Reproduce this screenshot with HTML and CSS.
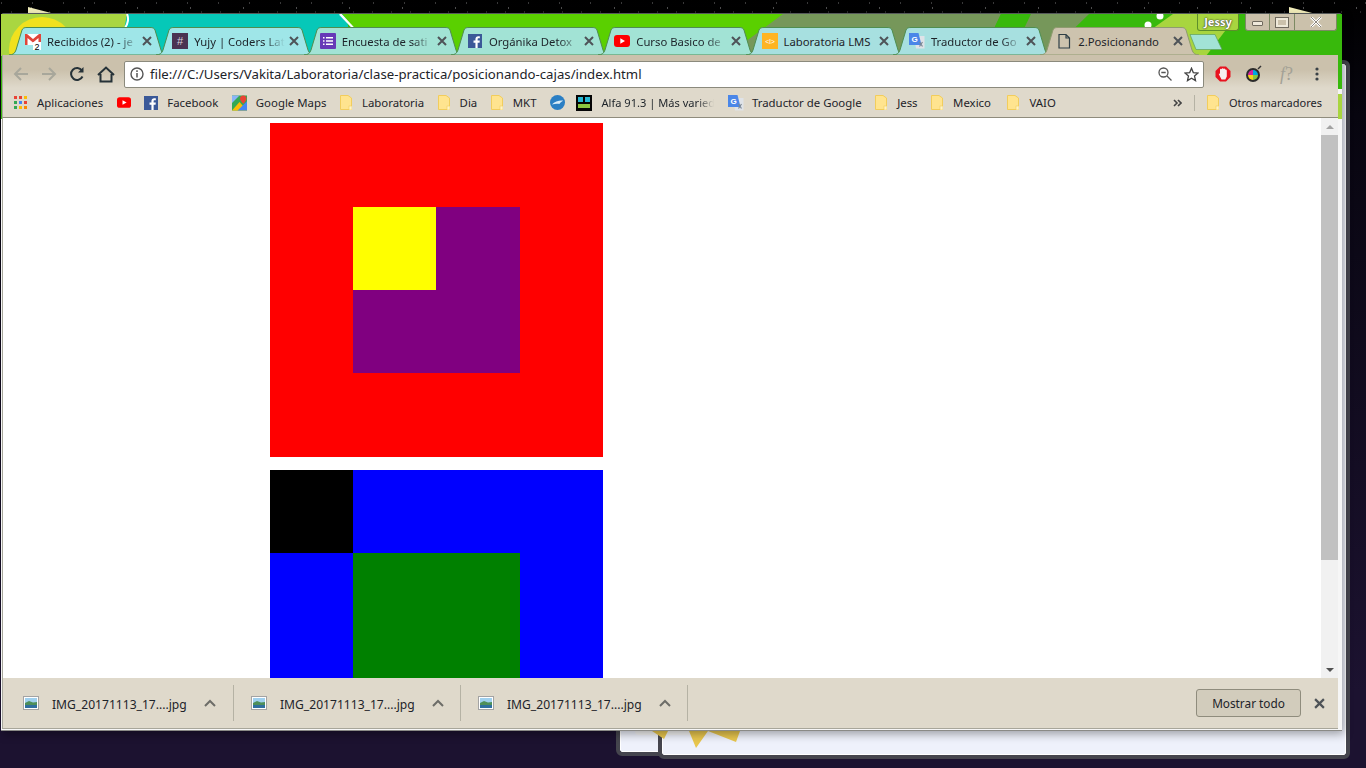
FILE: index.html
```html
<!DOCTYPE html>
<html>
<head>
  <title>2.Posicionando</title>
  <link rel="stylesheet" href="styles.css">
</head>
<body>
  <svg class="defs" width="0" height="0">
    <symbol id="tab-shape" viewBox="0 0 159 28" preserveAspectRatio="none">
      <path d="M0 28C4 28 6 26 7 23L13 3C14 1 15 .5 18 .5H141C144 .5 145 1 146 3L152 23C153 26 155 28 159 28Z"/>
    </symbol>
    <symbol id="folder" viewBox="0 0 12 15">
      <path d="M.5.5H8L11.500 3V14.500H.5Z" fill="#ffe48f" stroke="#f2cd5c"/>
      <rect x="9" y="11" width="3" height="4" fill="#fff3c6" stroke="#f2cd5c" stroke-width=".6"/>
    </symbol>
    <symbol id="close-x" viewBox="0 0 10 10">
      <path d="M1 1L9 9M9 1L1 9" stroke="#4e5358" stroke-width="2" fill="none"/>
    </symbol>
    <symbol id="fb" viewBox="0 0 16 16">
      <rect width="16" height="16" fill="#3b5998"/>
      <path d="M11 16V10h2.200l.3-2.500H11V6c0-.8.3-1.200 1.200-1.200h1.300V2.600C13.200 2.500 12.500 2.500 11.800 2.500 9.800 2.500 8.500 3.700 8.500 5.800V7.500H6.300V10h2.200v6Z" fill="#fff"/>
    </symbol>
    <symbol id="yt" viewBox="0 0 16 12">
      <rect width="16" height="12" rx="3" fill="#f00"/>
      <path d="M6.300 3.300L11 6 6.300 8.700Z" fill="#fff"/>
    </symbol>
    <symbol id="translate" viewBox="0 0 16 16">
      <path d="M5 3H15.500V15.500H7Z" fill="#dfe3e8"/>
      <path d="M0 0H9.500L12.500 12H0Z" fill="#4a86e8"/>
      <path d="M10.500 9l3 4.500M13.500 9l-3 4.500" stroke="#7b8794" stroke-width="1.200"/>
    </symbol>
    <symbol id="pic" viewBox="0 0 16 14">
      <rect x=".5" y=".5" width="15" height="13" fill="#fff" stroke="#a3a3a3"/>
      <rect x="2" y="2" width="12" height="5" fill="#9fd0ee"/>
      <path d="M2 7L6 5 10 6.500 14 6V9H2Z" fill="#4e8f5a"/>
      <rect x="2" y="9" width="12" height="3" fill="#2f6f9f"/>
    </symbol>
    <symbol id="chev" viewBox="0 0 12 8">
      <path d="M1 7L6 2 11 7" fill="none" stroke="#6d6d68" stroke-width="2"/>
    </symbol>
  </svg>

  <div class="paper-scrap paper-left"></div>
  <div class="paper-scrap paper-right"></div>
  <div class="back-window back-a"></div>
  <div class="back-window back-b"></div>
  <div class="back-sheet"></div>
  <svg class="back-stars" width="90" height="20" viewBox="0 0 90 20">
    <path d="M0 0H16L12 8Z M37 0H56L44 17Z M56 0H88L84 11Z" fill="#e8c64e"/>
  </svg>

  <div class="browser">
    <svg class="theme" width="1341" height="105" viewBox="0 0 1341 105" preserveAspectRatio="none">
      <rect width="1341" height="105" fill="#38b90c"/>
      <rect y="75" x="1336" width="5" height="5" fill="#f4f4f4"/>
      <rect y="80" x="1336" width="5" height="25" fill="#a8d53f"/>
      <rect width="135" height="42" fill="#a9d641"/>
      <circle cx="41" cy="36" r="33" fill="#f0e11e"/>
      <path d="M126 0H345L352 42H118Z" fill="#06c8b8"/>
      <path d="M126 0C128 4 127 10 124 14" stroke="#fff" stroke-width="2" fill="none"/>
      <path d="M339 0L360 22" stroke="#fff" stroke-width="2.500" fill="none"/>
      <path d="M341 0H790L730 42H380Z" fill="#5ad000"/>
      <path d="M782 0H1000L980 42H725Z" fill="#76975a"/>
      <path d="M1000 0H1030L1005 42H980Z" fill="#38b90c"/>
      <path d="M1030 0H1088L1045 42H1010Z" fill="#76975a"/>
      <path d="M1172 0H1237L1205 42H1172L1144 20Z" fill="#a8d53f"/>
      <circle cx="1159" cy="2" r="3.500" fill="#fff"/>
      <circle cx="1147" cy="11" r="3.500" fill="#fff"/>
    </svg>

    <div class="tabstrip">
      <div class="tab tab-teal">
        <svg class="tab-bg"><use href="#tab-shape"/></svg>
        <svg class="favicon" width="16" height="17" viewBox="0 0 16 17">
          <rect y="1" width="16" height="11" fill="#fff"/>
          <path d="M0 1H2L8 6 14 1H16V12H13.500V5L8 9.500 2.500 5V12H0Z" fill="#e0453a"/>
          <rect x="8" y="9" width="8" height="8" fill="#fff"/>
          <text x="9.500" y="16.500" class="gmail-count">2</text>
        </svg>
        <span class="tab-title">Recibidos (2) - je</span>
        <svg class="tab-close"><use href="#close-x"/></svg>
      </div>
      <div class="tab tab-teal">
        <svg class="tab-bg"><use href="#tab-shape"/></svg>
        <svg class="favicon" width="16" height="16" viewBox="0 0 16 16">
          <rect width="16" height="16" fill="#4a3352"/>
          <text x="8" y="12" class="hash">#</text>
        </svg>
        <span class="tab-title">Yujy | Coders Lat</span>
        <svg class="tab-close"><use href="#close-x"/></svg>
      </div>
      <div class="tab tab-mint">
        <svg class="tab-bg"><use href="#tab-shape"/></svg>
        <svg class="favicon" width="16" height="16" viewBox="0 0 16 16">
          <rect width="16" height="16" rx="1" fill="#673ab7"/>
          <path d="M3 4H4.500V5.500H3ZM6 4H13V5.500H6ZM3 7.300H4.500V8.800H3ZM6 7.300H13V8.800H6ZM3 10.600H4.500V12.100H3ZM6 10.600H13V12.100H6Z" fill="#fff"/>
        </svg>
        <span class="tab-title">Encuesta de sati</span>
        <svg class="tab-close"><use href="#close-x"/></svg>
      </div>
      <div class="tab tab-mint">
        <svg class="tab-bg"><use href="#tab-shape"/></svg>
        <svg class="favicon" width="14" height="14"><use href="#fb"/></svg>
        <span class="tab-title">Orgánika Detox</span>
        <svg class="tab-close"><use href="#close-x"/></svg>
      </div>
      <div class="tab tab-mint">
        <svg class="tab-bg"><use href="#tab-shape"/></svg>
        <svg class="favicon" width="16" height="16" viewBox="0 -2 16 16"><use href="#yt" width="16" height="12"/></svg>
        <span class="tab-title">Curso Basico de</span>
        <svg class="tab-close"><use href="#close-x"/></svg>
      </div>
      <div class="tab tab-blue">
        <svg class="tab-bg"><use href="#tab-shape"/></svg>
        <svg class="favicon" width="16" height="16" viewBox="0 0 16 16">
          <rect width="16" height="16" fill="#ffb422"/>
          <text x="8" y="10.500" class="lab-mark">&lt;l&gt;</text>
        </svg>
        <span class="tab-title tab-title-full">Laboratoria LMS</span>
        <svg class="tab-close"><use href="#close-x"/></svg>
      </div>
      <div class="tab tab-blue">
        <svg class="tab-bg"><use href="#tab-shape"/></svg>
        <svg class="favicon" width="16" height="16" viewBox="0 0 16 16"><use href="#translate"/><text x="5.500" y="9" class="g-mark">G</text></svg>
        <span class="tab-title">Traductor de Go</span>
        <svg class="tab-close"><use href="#close-x"/></svg>
      </div>
      <div class="tab tab-active">
        <svg class="tab-bg"><use href="#tab-shape"/></svg>
        <svg class="favicon" width="16" height="16" viewBox="0 0 16 16">
          <path d="M3 1.500H10L13.500 5V15H3ZM10 1.500V5H13.500" fill="none" stroke="#2f3f46" stroke-width="1.200"/>
        </svg>
        <span class="tab-title tab-title-full">2.Posicionando</span>
        <svg class="tab-close"><use href="#close-x"/></svg>
      </div>
      <svg class="new-tab" width="33" height="16" viewBox="0 0 33 16">
        <path d="M1 .5H26L33 15.500H7Z" fill="#a2e3d6" stroke="#5f9f5e" stroke-width=".7"/>
      </svg>
    </div>

    <div class="caption">
      <span class="profile">Jessy</span>
      <div class="win-buttons">
        <span class="win-btn btn-min"><i></i></span>
        <span class="win-btn btn-max"><i></i></span>
        <span class="win-btn btn-close">
          <svg width="12" height="10" viewBox="0 0 12 10"><path d="M1 0L11 10M11 0L1 10" stroke="#fff" stroke-width="2.500"/><path d="M1 0L11 10M11 0L1 10" stroke="#6f6a5e" stroke-width=".8"/></svg>
        </span>
      </div>
    </div>

    <div class="toolbar">
      <svg class="tool" width="16" height="16" viewBox="0 0 16 16"><path d="M15 8H2M8 2L2 8 8 14" class="nav-off"/></svg>
      <svg class="tool" width="16" height="16" viewBox="0 0 16 16"><path d="M1 8H14M8 2L14 8 8 14" class="nav-off"/></svg>
      <svg class="tool" width="16" height="16" viewBox="0 0 16 16">
        <path d="M13.500 10.500A6 6 0 1 1 13 4.500" class="nav-on"/>
        <path d="M14.500 1V6.500H9Z" fill="#263238"/>
      </svg>
      <svg class="tool" width="18" height="17" viewBox="0 0 18 17"><path d="M1 9L9 1.500 17 9M3.500 8V15.500H14.500V8" class="nav-on"/></svg>
      <div class="omnibox">
        <svg class="info" width="14" height="14" viewBox="0 0 14 14">
          <circle cx="7" cy="7" r="6" fill="none" stroke="#555" stroke-width="1.400"/>
          <path d="M7 6V10.500M7 3.300V5" stroke="#555" stroke-width="1.500"/>
        </svg>
        <span class="url">file:///C:/Users/Vakita/Laboratoria/clase-practica/posicionando-cajas/index.html</span>
        <svg class="omni-icon" width="14" height="14" viewBox="0 0 14 14">
          <circle cx="5.500" cy="5.500" r="4.500" fill="none" stroke="#555" stroke-width="1.300"/>
          <path d="M3.300 5.500H7.700M9 9L13.500 13.500" stroke="#555" stroke-width="1.300"/>
        </svg>
        <svg class="omni-icon" width="15" height="15" viewBox="0 0 15 15">
          <path d="M7.500 1.300L9.300 5.600 14 6 10.500 9 11.500 13.600 7.500 11.200 3.500 13.600 4.500 9 1 6 5.700 5.600Z" fill="none" stroke="#444" stroke-width="1.300"/>
        </svg>
      </div>
      <div class="extensions">
        <svg width="16" height="16" viewBox="0 0 16 16">
          <path d="M5 .5H11L15.500 5V11L11 15.500H5L.5 11V5Z" fill="#e8121f"/>
          <path d="M4 8.500C3.500 7.500 4.500 7 5 8V3.500C5.300 2.500 6.200 2.500 6.500 3.200 6.800 2 8.200 2 8.500 3 9 2.300 10 2.600 10.200 3.500 11 3.300 11.800 3.800 11.800 4.800V10.500L10.300 13.500H6.500Z" fill="#f5eeee"/>
        </svg>
        <svg width="18" height="18" viewBox="0 0 18 18">
          <circle cx="8" cy="10" r="7" fill="#2b2b2b"/>
          <path d="M8 5A5 5 0 0 1 13 10H8Z" fill="#00a9e0"/>
          <path d="M13 10A5 5 0 0 1 8 15V10Z" fill="#8bc53f"/>
          <path d="M8 15A5 5 0 0 1 3 10H8Z" fill="#f7d117"/>
          <path d="M3 10A5 5 0 0 1 8 5V10Z" fill="#d6249f"/>
          <path d="M13 4L16 1" stroke="#333" stroke-width="1.500"/>
        </svg>
        <span class="font-ext"><em>f</em>?</span>
        <svg width="4" height="14" viewBox="0 0 4 14" class="menu-dots">
          <circle cx="2" cy="2" r="1.600"/><circle cx="2" cy="7" r="1.600"/><circle cx="2" cy="12" r="1.600"/>
        </svg>
      </div>
    </div>

    <div class="bookmarks">
      <div class="bm bm-apps">
        <svg width="13" height="13" viewBox="0 0 13 13">
          <rect width="3" height="3" fill="#e94335"/><rect x="5" width="3" height="3" fill="#e94335"/><rect x="10" width="3" height="3" fill="#fbbc05"/>
          <rect y="5" width="3" height="3" fill="#34a853"/><rect x="5" y="5" width="3" height="3" fill="#4285f4"/><rect x="10" y="5" width="3" height="3" fill="#e94335"/>
          <rect y="10" width="3" height="3" fill="#34a853"/><rect x="5" y="10" width="3" height="3" fill="#fbbc05"/><rect x="10" y="10" width="3" height="3" fill="#fb8c00"/>
        </svg>
        <span>Aplicaciones</span>
      </div>
      <div class="bm"><svg width="14" height="11"><use href="#yt"/></svg></div>
      <div class="bm"><svg width="14" height="14"><use href="#fb"/></svg><span>Facebook</span></div>
      <div class="bm">
        <svg width="15" height="16" viewBox="0 0 16 16">
          <rect width="16" height="16" fill="#35a853"/>
          <path d="M0 16L8 7 16 16Z" fill="#fbbc05"/>
          <path d="M0 8L8 0H0Z" fill="#8ab4f8"/>
          <path d="M6 16L16 6V16Z" fill="#4285f4"/>
          <path d="M12 0C9.800 0 8.500 1.500 8.500 3.300 8.500 5.500 12 9 12 9S15.500 5.500 15.500 3.300C15.500 1.500 14.200 0 12 0Z" fill="#e94335"/>
        </svg>
        <span>Google Maps</span>
      </div>
      <div class="bm bm-folder"><svg width="12" height="15"><use href="#folder"/></svg><span>Laboratoria</span></div>
      <div class="bm bm-folder"><svg width="12" height="15"><use href="#folder"/></svg><span>Dia</span></div>
      <div class="bm bm-folder"><svg width="12" height="15"><use href="#folder"/></svg><span>MKT</span></div>
      <div class="bm">
        <svg width="15" height="15" viewBox="0 0 16 16">
          <circle cx="8" cy="8" r="8" fill="#2b7fc4"/>
          <path d="M2 10C5 7 10 5.500 14 6 12 7 11 8 10 9.500 7.500 9 5 9.300 2 10Z" fill="#d8ecf8"/>
        </svg>
      </div>
      <div class="bm bm-alfa">
        <svg width="16" height="16" viewBox="0 0 16 16">
          <rect width="16" height="16" fill="#050505"/>
          <rect x="2" y="2" width="5" height="5" fill="#25b7d3"/><rect x="9" y="2" width="5" height="5" fill="#25b7d3"/>
          <rect x="2" y="9" width="12" height="4" fill="#8bc53f"/>
        </svg>
        <span class="bm-fade">Alfa 91.3 | Más varied</span>
      </div>
      <div class="bm bm-gt"><svg width="16" height="16" viewBox="0 0 16 16"><use href="#translate"/><text x="5.500" y="9" class="g-mark">G</text></svg><span>Traductor de Google</span></div>
      <div class="bm bm-folder"><svg width="12" height="15"><use href="#folder"/></svg><span>Jess</span></div>
      <div class="bm bm-folder"><svg width="12" height="15"><use href="#folder"/></svg><span>Mexico</span></div>
      <div class="bm bm-folder bm-vaio"><svg width="12" height="15"><use href="#folder"/></svg><span>VAIO</span></div>
      <div class="bm-right">
        <svg width="9" height="8" viewBox="0 0 9 8"><path d="M1 1L4 4 1 7M5 1L8 4 5 7" fill="none" stroke="#444" stroke-width="1.600"/></svg>
        <i class="bm-sep"></i>
        <div class="bm bm-folder bm-other"><svg width="12" height="15"><use href="#folder"/></svg><span>Otros marcadores</span></div>
      </div>
    </div>

    <div class="viewport">
      <div class="page">
        <div class="box-red">
          <div class="box-purple">
            <div class="box-yellow"></div>
          </div>
        </div>
        <div class="box-blue">
          <div class="box-black"></div>
          <div class="box-green"></div>
        </div>
      </div>
      <div class="scrollbar">
        <span class="arrow arrow-up"></span>
        <span class="thumb"></span>
        <span class="arrow arrow-down"></span>
      </div>
    </div>

    <div class="downloads">
      <div class="dl-item">
        <svg width="16" height="14"><use href="#pic"/></svg>
        <span class="dl-name">IMG_20171113_17....jpg</span>
        <svg class="dl-chev" width="12" height="8"><use href="#chev"/></svg>
      </div>
      <div class="dl-item">
        <svg width="16" height="14"><use href="#pic"/></svg>
        <span class="dl-name">IMG_20171113_17....jpg</span>
        <svg class="dl-chev" width="12" height="8"><use href="#chev"/></svg>
      </div>
      <div class="dl-item">
        <svg width="16" height="14"><use href="#pic"/></svg>
        <span class="dl-name">IMG_20171113_17....jpg</span>
        <svg class="dl-chev" width="12" height="8"><use href="#chev"/></svg>
      </div>
      <button class="show-all">Mostrar todo</button>
      <svg class="dl-close" width="11" height="11" viewBox="0 0 10 10"><use href="#close-x"/></svg>
    </div>
  </div>
</body>
</html>
```

FILE: styles.css
```css
* {
  box-sizing: border-box;
}

html, body {
  height: 100%;
}

body {
  margin: 0;
  overflow: hidden;
  position: relative;
  font-family: "Noto Sans", "Open Sans", sans-serif;
  font-size: 11.4px;
  color: #1d2329;
  background: linear-gradient(to bottom, #000 0, #07050f 15%, #1c1230 90%, #1c1230 100%);
}

/* starry strip above the window */
body::before {
  content: "";
  position: absolute;
  left: 0;
  top: 0;
  width: 100%;
  height: 14px;
  background-image:
    radial-gradient(circle, rgba(255,255,255,.3) .5px, transparent 1px),
    radial-gradient(circle, rgba(255,255,255,.22) .5px, transparent 1px),
    radial-gradient(circle, rgba(255,255,255,.16) .5px, transparent 1px);
  background-size: 53px 14px, 31px 14px, 19px 14px;
  background-position: 5px 1px, 17px -4px, 2px 5px;
}

.defs {
  position: absolute;
}

/* stuff behind the browser */
.paper-scrap {
  position: absolute;
  top: 7px;
  width: 27px;
  height: 7px;
  background: #f3eebb;
  clip-path: polygon(0 0, 100% 100%, 0 100%);
}

.paper-left {
  left: 28px;
}

.paper-right {
  left: 1289px;
}

.back-window {
  position: absolute;
  background: #eef1fb;
  border: 1px solid #fff;
  outline: 4px solid #45454e;
  outline-offset: 0;
  border-radius: 2px;
}

.back-a {
  left: 620px;
  top: 60px;
  width: 700px;
  height: 692px;
}

.back-b {
  left: 662px;
  top: 64px;
  width: 684px;
  height: 691px;
}

.back-sheet {
  position: absolute;
  left: 635px;
  top: 725px;
  width: 105px;
  height: 10px;
  background: #f4f4f4;
  border-radius: 0 0 4px 4px;
}

.back-stars {
  position: absolute;
  left: 652px;
  top: 731px;
}

/* browser window */
.browser {
  position: absolute;
  left: 1px;
  top: 13px;
  width: 1341px;
  height: 717px;
  padding: 0 4px 1px 1px;
  background: #f6f6f6;
  border-top: 1px solid #55595a;
  border-radius: 3px 3px 0 0;
  box-shadow: 0 1px 0 #8a8a86, 2px 4px 10px rgba(0, 0, 0, .35);
  display: flex;
  flex-direction: column;
}

.theme {
  position: absolute;
  left: 0;
  top: 0;
}

.tabstrip {
  position: relative;
  height: 41px;
  display: flex;
  align-items: flex-end;
  padding-left: 7px;
  flex-shrink: 0;
}

.tab {
  position: relative;
  width: 159px;
  height: 28px;
  margin-right: -11.7px;
  padding: 0 16px;
  display: flex;
  align-items: center;
  flex-shrink: 0;
}

.tab-bg {
  position: absolute;
  left: 0;
  top: 0;
  width: 100%;
  height: 100%;
  stroke: #4f8d50;
  stroke-width: 1;
}

.tab-teal .tab-bg {
  fill: #9fe6e8;
}

.tab-mint .tab-bg {
  fill: #a2e3d5;
}

.tab-blue .tab-bg {
  fill: #a7e0e0;
}

.tab-active {
  z-index: 2;
}

.tab-active .tab-bg {
  fill: #cdc3ae;
  stroke: #8f9b70;
}

.favicon {
  position: relative;
  flex-shrink: 0;
  width: 16px;
  margin-right: 6px;
}

.tab-title {
  position: relative;
  flex: 1;
  min-width: 0;
  white-space: nowrap;
  overflow: hidden;
  font-size: 11.3px;
  -webkit-mask-image: linear-gradient(to right, #000 78%, transparent 100%);
  mask-image: linear-gradient(to right, #000 78%, transparent 100%);
}

.tab-title-full {
  -webkit-mask-image: none;
  mask-image: none;
}

.tab-close {
  position: relative;
  flex-shrink: 0;
  width: 10px;
  height: 10px;
  margin-left: 4px;
}

.gmail-count {
  font: 9px "Liberation Sans", sans-serif;
  fill: #000;
}

.hash {
  font: 11px "Liberation Sans", sans-serif;
  fill: #d8d0dc;
  text-anchor: middle;
}

.lab-mark {
  font: 7px "Liberation Sans", sans-serif;
  fill: #fff;
  text-anchor: middle;
}

.g-mark {
  font: bold 8px "Liberation Sans", sans-serif;
  fill: #fff;
  text-anchor: middle;
}

.new-tab {
  position: relative;
  margin: 0 0 5px 1px;
  flex-shrink: 0;
}

/* profile + window buttons, on top of the frame */
.caption {
  position: absolute;
  right: 5px;
  top: 0;
  display: flex;
  gap: 6px;
}

.profile {
  width: 42px;
  height: 17px;
  line-height: 15px;
  text-align: center;
  font-size: 11px;
  font-weight: 700;
  color: #fff;
  text-shadow: 0 0 2px #333, 0 0 1px #333;
  background: #a8d53f;
  border: 1px solid #5d8f2b;
  border-top: 0;
  border-radius: 0 0 3px 3px;
}

.win-buttons {
  display: flex;
  width: 92px;
  height: 17px;
  background: #cbc1ab;
  border: 1px solid #7c8a63;
  border-top: 0;
  border-radius: 0 0 3px 3px;
}

.win-btn {
  display: flex;
  align-items: center;
  justify-content: center;
  border-right: 1px solid #7c8a63;
}

.btn-min {
  width: 24px;
}

.btn-min i {
  display: block;
  width: 11px;
  height: 5px;
  margin-top: 3px;
  background: #efe9da;
  border: 1px solid #6f6a5e;
  border-radius: 1px;
}

.btn-max {
  width: 25px;
}

.btn-max i {
  display: block;
  width: 12px;
  height: 9px;
  border: 2px solid #efe9da;
  outline: 1px solid #6f6a5e;
}

.btn-close {
  flex: 1;
  border-right: 0;
}

/* toolbar */
.toolbar {
  position: relative;
  height: 33px;
  flex-shrink: 0;
  display: flex;
  align-items: center;
  padding: 5px 0 0 10px;
  background: linear-gradient(to bottom, #cbc1ac 0, #cbc1ac 45%, #dfd9cb 100%);
  border-left: 1px solid #a8a89c;
}

.tool {
  flex-shrink: 0;
  margin-right: 12px;
}

.nav-off {
  fill: none;
  stroke: #a8a79b;
  stroke-width: 2;
}

.nav-on {
  fill: none;
  stroke: #263238;
  stroke-width: 2;
}

.omnibox {
  width: 1080px;
  height: 27px;
  margin-left: -3px;
  display: flex;
  align-items: center;
  padding: 0 4px 0 5px;
  background: #fff;
  border: 1px solid #8b8a7d;
  border-radius: 2px;
}

.info {
  flex-shrink: 0;
  margin-right: 6px;
}

.url {
  flex: 1;
  font-size: 13.2px;
  white-space: nowrap;
}

.omni-icon {
  flex-shrink: 0;
  margin-left: 12px;
}

.extensions {
  flex: 1;
  display: flex;
  align-items: center;
  gap: 14px;
  padding-left: 11px;
}

.font-ext {
  margin: 0 8px 0 3px;
  font-family: "Liberation Serif", serif;
  font-size: 18px;
  color: #a3a196;
}

.menu-dots {
  fill: #3a4146;
}

/* bookmarks */
.bookmarks {
  position: relative;
  height: 30px;
  flex-shrink: 0;
  display: flex;
  align-items: center;
  gap: 13.5px;
  padding: 0 16px 0 11px;
  background: #dfd9cb;
  border-left: 1px solid #a8a89c;
  border-bottom: 1px solid #8f8c7d;
}

.bm {
  display: flex;
  align-items: center;
  gap: 9px;
  white-space: nowrap;
}

.bm-apps,
.bm-folder {
  gap: 10px;
}

.bm-alfa {
  margin-left: -2px;
}

.bm-gt {
  gap: 8px;
}

.bm-vaio {
  margin-left: 3px;
}

.bm-fade {
  width: 113px;
  overflow: hidden;
  font-size: 11.1px;
  -webkit-mask-image: linear-gradient(to right, #000 85%, transparent 100%);
  mask-image: linear-gradient(to right, #000 85%, transparent 100%);
}

.bm-right {
  margin-left: auto;
  display: flex;
  align-items: center;
  gap: 10px;
}

.bm-other {
  font-size: 11px;
}

.bm-sep {
  display: block;
  width: 1px;
  height: 16px;
  margin: 0 2px;
  background: #b5b2a4;
}

/* page area */
.viewport {
  position: relative;
  flex: 1;
  min-height: 0;
  display: flex;
  background: #fff;
  border-left: 1px solid #a8a89c;
}

.page {
  flex: 1;
  overflow: hidden;
  padding: 5px 0 0 267px;
}

.box-red {
  width: 333px;
  height: 334px;
  padding: 84px 83px;
  background: #f00;
}

.box-purple {
  width: 167px;
  height: 166px;
  background: #800080;
}

.box-yellow {
  width: 83px;
  height: 83px;
  background: #ff0;
}

.box-blue {
  width: 333px;
  height: 334px;
  margin-top: 13px;
  background: #00f;
}

.box-black {
  width: 83px;
  height: 83px;
  background: #000;
}

.box-green {
  width: 167px;
  height: 167px;
  margin-left: 83px;
  background: #008000;
}

.scrollbar {
  width: 17px;
  flex-shrink: 0;
  display: flex;
  flex-direction: column;
  align-items: center;
  background: #f1f1f1;
}

.thumb {
  width: 100%;
  height: 425px;
  margin-top: 6px;
  background: #c1c1c1;
}

.arrow {
  width: 0;
  height: 0;
  border-left: 4px solid transparent;
  border-right: 4px solid transparent;
}

.arrow-up {
  margin-top: 7px;
  border-bottom: 4px solid #a3a3a3;
}

.arrow-down {
  margin-top: auto;
  margin-bottom: 6px;
  border-top: 4px solid #505050;
}

/* download shelf */
.downloads {
  position: relative;
  height: 51px;
  flex-shrink: 0;
  display: flex;
  align-items: center;
  background: #dfd9cb;
  border-left: 1px solid #a8a89c;
  border-bottom: 1px solid #a8a69a;
}

.dl-item {
  width: 227px;
  height: 36px;
  display: flex;
  align-items: center;
  padding: 2px 0 0 17px;
  font-size: 12.1px;
  border-right: 1px solid #b5b2a4;
}

.dl-item:first-child {
  width: 231px;
  padding-left: 20px;
}

.dl-item svg {
  flex-shrink: 0;
  margin-top: -2px;
}

.dl-name {
  margin-left: 13px;
  white-space: nowrap;
}

.dl-chev {
  margin-left: 17px;
}

.show-all {
  margin-left: auto;
  width: 105px;
  height: 28px;
  padding: 0;
  font: 11.8px "Noto Sans", "Open Sans", sans-serif;
  color: #1d2329;
  background: #d2ccbc;
  border: 1px solid #8f8c7d;
  border-radius: 3px;
}

.dl-close {
  margin: 0 13px 0 13px;
  flex-shrink: 0;
}
```
